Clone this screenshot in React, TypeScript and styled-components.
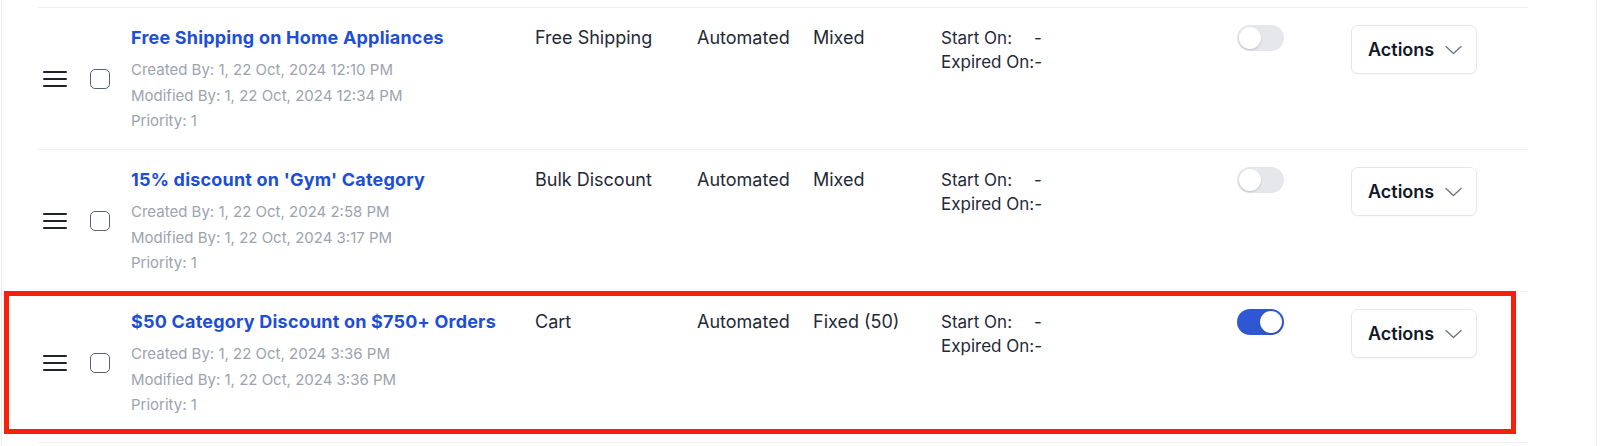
import React from "react";
import styled, { createGlobalStyle } from "styled-components";

const GlobalStyle = createGlobalStyle`
  * {
    box-sizing: border-box;
  }

  html,
  body {
    overflow: hidden;
  }

  body {
    margin: 0;
    background: #ffffff;
    font-family: Inter, "Liberation Sans", "Noto Sans", sans-serif;
    -webkit-font-smoothing: antialiased;
  }
`;

const Panel = styled.div`
  margin-left: 1px;
  width: 1596px;
  height: 446px;
  overflow: hidden;
  padding-top: 7px;
  border-left: 1px solid #eceef2;
  border-right: 1px solid #eceef2;
`;

const RuleList = styled.div`
  margin-left: 36px;
  width: 1490px;
  border-bottom: 1px solid #eef0f3;
`;

const RowWrap = styled.div`
  position: relative;
`;

const Row = styled.div<{ $height: number }>`
  display: grid;
  grid-template-columns: 47px 41px 404px 162px 116px 128px 296px 114px 170px;
  height: ${(p) => p.$height}px;
  padding: 18px 0 0 5px;
  border-top: 1px solid #eef0f3;
  color: #1f2937;
  font-size: 18px;
  line-height: 24px;
`;

const Highlight = styled.div`
  position: absolute;
  top: 0;
  left: -34px;
  right: 12px;
  height: 143px;
  border: 5px solid #f91f0b;
  pointer-events: none;
`;

const HandleCell = styled.div`
  display: flex;
  align-items: center;
  margin-top: -18px;
  height: 142px;
`;

const Handle = styled.div`
  display: flex;
  flex-direction: column;
  gap: 5px;
  width: 24px;

  span {
    display: block;
    height: 2px;
    background: #1f2328;
    border-radius: 1px;
  }
`;

const Checkbox = styled.div`
  width: 20px;
  height: 20px;
  border: 1.5px solid #596273;
  border-radius: 5px;
  background: #fff;
`;

const Info = styled.div`
  display: flex;
  flex-direction: column;
`;

const Title = styled.a`
  color: #1d4ed8;
  font-weight: 700;
  font-size: 18px;
  letter-spacing: 0.2px;
  line-height: 24px;
  text-decoration: none;
  margin-bottom: 7px;
`;

const Meta = styled.div`
  color: #9ca3af;
  font-size: 15px;
  line-height: 25.5px;
`;

const Cell = styled.div`
  white-space: nowrap;
`;

const DateLine = styled.div`
  font-size: 17px;
  line-height: 25px;
  margin-top: -0.5px;
`;

const DateLabel = styled.span<{ $width?: number }>`
  display: inline-block;
  min-width: ${(p) => (p.$width ? `${p.$width}px` : "0")};
`;

const Toggle = styled.div<{ $on: boolean }>`
  position: relative;
  width: 47px;
  height: 26px;
  margin-top: -1px;
  border-radius: 13px;
  background: ${(p) => (p.$on ? "#2f56d3" : "#e5e7eb")};

  &::after {
    content: "";
    position: absolute;
    top: 2px;
    left: ${(p) => (p.$on ? "23px" : "2px")};
    width: 22px;
    height: 22px;
    border-radius: 50%;
    background: #fff;
    box-shadow: 0 1px 2px rgba(0, 0, 0, 0.18);
  }
`;

const ActionsButton = styled.button`
  display: flex;
  align-items: center;
  gap: 11px;
  width: 126px;
  height: 49px;
  margin-top: -1px;
  padding: 0 0 0 16px;
  background: #fff;
  border: 1px solid #e5e7eb;
  border-radius: 7px;
  box-shadow: 0 1px 2px rgba(0, 0, 0, 0.04);
  font-family: inherit;
  font-size: 18px;
  font-weight: 600;
  color: #111827;
  cursor: pointer;
`;

const Chevron = () => (
  <svg width="17" height="10" viewBox="0 0 17 10" fill="none">
    <polyline
      points="1,1.5 8.5,8.5 16,1.5"
      stroke="#6b7280"
      strokeWidth="1.3"
      strokeLinecap="round"
      strokeLinejoin="round"
    />
  </svg>
);

interface Rule {
  title: string;
  created: string;
  modified: string;
  priority: number;
  type: string;
  mode: string;
  discount: string;
  enabled: boolean;
  highlighted?: boolean;
  height: number;
}

const rules: Rule[] = [
  {
    title: "Free Shipping on Home Appliances",
    created: "1, 22 Oct, 2024 12:10 PM",
    modified: "1, 22 Oct, 2024 12:34 PM",
    priority: 1,
    type: "Free Shipping",
    mode: "Automated",
    discount: "Mixed",
    enabled: false,
    height: 142,
  },
  {
    title: "15% discount on 'Gym' Category",
    created: "1, 22 Oct, 2024 2:58 PM",
    modified: "1, 22 Oct, 2024 3:17 PM",
    priority: 1,
    type: "Bulk Discount",
    mode: "Automated",
    discount: "Mixed",
    enabled: false,
    height: 142,
  },
  {
    title: "$50 Category Discount on $750+ Orders",
    created: "1, 22 Oct, 2024 3:36 PM",
    modified: "1, 22 Oct, 2024 3:36 PM",
    priority: 1,
    type: "Cart",
    mode: "Automated",
    discount: "Fixed (50)",
    enabled: true,
    highlighted: true,
    height: 151,
  },
];

const RuleRow = ({ rule }: { rule: Rule }) => (
  <RowWrap>
    <Row $height={rule.height}>
      <HandleCell>
        <Handle>
          <span />
          <span />
          <span />
        </Handle>
      </HandleCell>
      <HandleCell>
        <Checkbox />
      </HandleCell>
      <Info>
        <Title href="#">{rule.title}</Title>
        <Meta>Created By: {rule.created}</Meta>
        <Meta>Modified By: {rule.modified}</Meta>
        <Meta>Priority: {rule.priority}</Meta>
      </Info>
      <Cell>{rule.type}</Cell>
      <Cell>{rule.mode}</Cell>
      <Cell>{rule.discount}</Cell>
      <Cell>
        <DateLine>
          <DateLabel $width={93}>Start On:</DateLabel>-
        </DateLine>
        <DateLine>
          <DateLabel>Expired On:</DateLabel>-
        </DateLine>
      </Cell>
      <Cell>
        <Toggle $on={rule.enabled} />
      </Cell>
      <Cell>
        <ActionsButton>
          Actions
          <Chevron />
        </ActionsButton>
      </Cell>
    </Row>
    {rule.highlighted && <Highlight />}
  </RowWrap>
);

export default function App() {
  return (
    <>
      <GlobalStyle />
      <Panel>
        <RuleList>
          {rules.map((rule) => (
            <RuleRow key={rule.title} rule={rule} />
          ))}
        </RuleList>
      </Panel>
    </>
  );
}
